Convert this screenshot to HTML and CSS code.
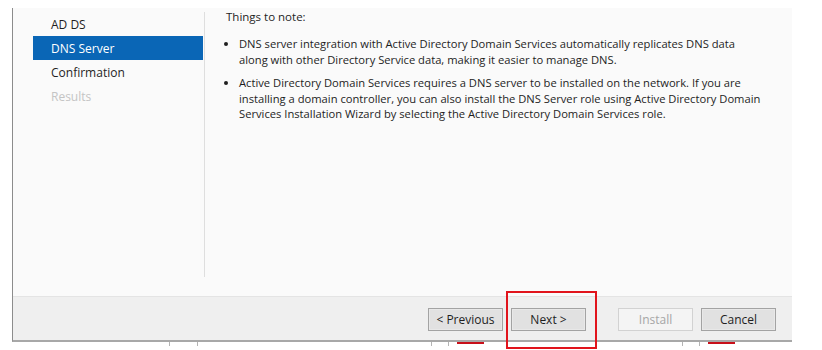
FILE: index.html
```html
<!DOCTYPE html>
<html lang="en">
<head>
  <meta charset="UTF-8" />
  <title>Add Roles and Features Wizard - DNS Server</title>
  <link rel="stylesheet" href="styles.css">
</head>
<body>
  <div class="screen">
    <div class="window">
      <div class="main">
        <ul class="steps">
          <li>AD DS</li>
          <li class="active">DNS Server</li>
          <li>Confirmation</li>
          <li class="disabled">Results</li>
        </ul>

        <div class="content">
          <p class="heading">Things to note:</p>
          <ul class="notes">
            <li>DNS server integration with Active Directory Domain Services automatically replicates DNS data<br>along with other Directory Service data, making it easier to manage DNS.</li>
            <li>Active Directory Domain Services requires a DNS server to be installed on the network. If you are<br>installing a domain controller, you can also install the DNS Server role using Active Directory Domain<br>Services Installation Wizard by selecting the Active Directory Domain Services role.</li>
          </ul>
        </div>
      </div>

      <div class="footer">
        <button class="btn">&lt; Previous</button>
        <button class="btn">Next &gt;</button>
        <button class="btn install" disabled>Install</button>
        <button class="btn">Cancel</button>
      </div>
    </div>

    <!-- bits of the taskbar peeking out under the dialog -->
    <div class="taskbar">
      <span class="tick t1"></span>
      <span class="tick t2"></span>
      <span class="tick t3"></span>
      <span class="tick t4"></span>
      <span class="tick t5"></span>
      <span class="tick t6"></span>
      <span class="mark m1"></span>
      <span class="mark m2"></span>
    </div>

    <div class="highlight"></div>
  </div>
</body>
</html>
```

FILE: styles.css
```css
* {
  box-sizing: border-box;
}

body {
  margin: 0;
  background: #fff;
  font-family: 'Open Sans', 'Noto Sans', sans-serif;
  font-size: 11px;
  color: #1e1e1e;
}

.screen {
  position: relative;
  width: 822px;
  height: 350px;
  padding-top: 8px;
  overflow: hidden;
}

.window {
  margin-left: 12px;
  width: 780px;
  border-left: 1px solid #8c8c8c;
  border-bottom: 2px solid #a8a8a8;
}

.main {
  display: flex;
  align-items: flex-start;
  height: 288px;
  background: #fafafa;
}

.steps {
  list-style: none;
  margin: 4px 0 0;
  padding: 0 0 0 20px;
  width: 192px;
  height: 265px;
  border-right: 1px solid #dedede;
}

.steps li {
  height: 24px;
  line-height: 22px;
  padding: 2px 0 0 18px;
  width: 170px;
  font-size: 12px;
}

.steps li.active {
  background: #0a66b6;
  color: #fff;
}

.steps li.disabled {
  color: #c4c4c4;
}

.content {
  padding-left: 21px;
  white-space: nowrap;
}

.heading {
  margin: 1px 0 0;
  line-height: 16px;
  font-size: 11.5px;
}

.notes {
  margin: 11px 0 0;
  padding-left: 13px;
}

.notes li {
  line-height: 15.5px;
  margin-bottom: 8px;
  font-size: 11.2px;
}

.footer {
  display: flex;
  align-items: flex-start;
  height: 44px;
  padding: 11px 0 0 415px;
  gap: 8px;
  background: #efefef;
  border-top: 1px solid #e4e4e4;
}

.btn {
  width: 75px;
  height: 23px;
  padding: 0;
  font-family: inherit;
  font-size: 12px;
  color: #1e1e1e;
  background: #e1e1e1;
  border: 1px solid #a3a3a3;
  box-shadow: inset 0 0 0 1px #e8e8e8;
}

.btn.install {
  margin-left: 24px;
  color: #a6a6a6;
  background: #f4f4f4;
  border-color: #d2d2d2;
  box-shadow: none;
}

.taskbar {
  position: relative;
  height: 8px;
}

.tick {
  position: absolute;
  top: 0;
  width: 1px;
  height: 4px;
  background: #b4b4b4;
}

.t1 { left: 169px; }
.t2 { left: 197px; }
.t3 { left: 431px; }
.t4 { left: 448px; }
.t5 { left: 682px; }
.t6 { left: 699px; }

.mark {
  position: absolute;
  top: 0;
  width: 27px;
  height: 2px;
  background: #c8101a;
}

.m1 { left: 457px; }
.m2 { left: 708px; }

.highlight {
  position: absolute;
  left: 506px;
  top: 291px;
  width: 91px;
  height: 58px;
  border: 2px solid #e1141c;
}
```
